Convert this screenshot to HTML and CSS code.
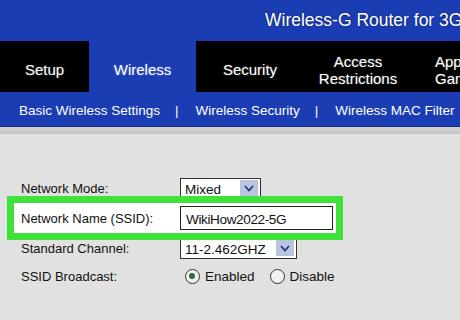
FILE: index.html
```html
<!DOCTYPE html>
<html lang="en">
<head>
    <meta charset="UTF-8">
    <title>Wireless-G Router for 3G/UMTS</title>
    <link rel="stylesheet" href="styles.css">
</head>
<body>

<div class="header">
    <div class="title">Wireless-G Router for 3G/UMTS Broadband</div>
</div>

<div class="tabs">
    <div class="tab tab-setup">Setup</div>
    <div class="tab tab-wireless active">Wireless</div>
    <div class="tab tab-security">Security</div>
    <div class="tab tab-access">Access<br>Restrictions</div>
    <div class="tab tab-apps">Applications &amp;<br>Gaming</div>
</div>

<div class="subnav">
    <span class="sub-link">Basic Wireless Settings</span>
    <span class="sep">|</span>
    <span class="sub-link">Wireless Security</span>
    <span class="sep">|</span>
    <span class="sub-link">Wireless MAC Filter</span>
</div>

<div class="shade"></div>

<div class="content">
    <div class="row">
        <span class="label">Network Mode:</span>
        <div class="select select-mode">
            <span class="select-value">Mixed</span>
            <span class="select-arrow">
                <svg width="10" height="7" viewBox="0 0 10 7"><path d="M1 1 L5 5.5 L9 1" fill="none" stroke="#1d2f7a" stroke-width="1.6"/></svg>
            </span>
        </div>
    </div>

    <!-- highlighted field -->
    <div class="highlight">
        <span class="label">Network Name (SSID):</span>
        <input type="text" class="ssid" value="WikiHow2022-5G">
    </div>

    <div class="row row-channel">
        <span class="label">Standard Channel:</span>
        <div class="select select-channel">
            <span class="select-value">11-2.462GHZ</span>
            <span class="select-arrow">
                <svg width="10" height="7" viewBox="0 0 10 7"><path d="M1 1 L5 5.5 L9 1" fill="none" stroke="#1d2f7a" stroke-width="1.6"/></svg>
            </span>
        </div>
    </div>

    <div class="row row-broadcast">
        <span class="label">SSID Broadcast:</span>
        <span class="radio checked"></span>
        <span class="radio-text">Enabled</span>
        <span class="radio"></span>
        <span class="radio-text">Disable</span>
    </div>
</div>

</body>
</html>
```

FILE: styles.css
```css
* {
    box-sizing: border-box;
}

body {
    margin: 0;
    width: 460px;
    height: 320px;
    overflow: hidden;
    font-family: 'Liberation Sans', Arial, sans-serif;
    background: #e1e1e1;
}

.header {
    height: 41px;
    background: #1b3db4;
    overflow: hidden;
}

.title {
    padding: 10px 0 0 265px;
    white-space: nowrap;
    color: #fff;
    font-size: 17.5px;
    text-shadow: 0 0 2px rgba(0, 0, 0, 0.5);
}

.tabs {
    display: flex;
    height: 51px;
    background: #000;
    overflow: hidden;
}

.tab {
    display: flex;
    align-items: center;
    justify-content: center;
    flex-shrink: 0;
    padding-top: 6px;
    color: #fff;
    font-size: 15px;
    line-height: 17px;
    text-align: center;
    white-space: nowrap;
    text-shadow: 0 0 2px rgba(255, 255, 255, 0.3);
}

.tab-setup {
    width: 89px;
}

.tab-wireless {
    width: 107px;
}

.tab-security {
    width: 108px;
}

.tab-access {
    width: 108px;
    padding-top: 7px;
}

.tab-apps {
    width: 120px;
    justify-content: flex-start;
    padding-left: 23px;
    padding-top: 7px;
    text-align: left;
}

.tab.active {
    background: #1b3db4;
}

.subnav {
    display: flex;
    align-items: center;
    height: 35px;
    padding: 3px 0 0 19px;
    background: #1b3db4;
    border-bottom: 1px solid #152a78;
    color: #fff;
    font-size: 13.5px;
    white-space: nowrap;
}

.sep {
    margin: 0 17px 0 15px;
}

.shade {
    height: 7px;
    background: linear-gradient(#d2d2d2, #c4c4c4);
}

.content {
    padding-top: 44px;
    color: #111;
    font-size: 13px;
}

.row {
    display: flex;
    align-items: center;
    padding-left: 21px;
}

.label {
    width: 159px;
    flex-shrink: 0;
}

.select {
    display: flex;
    align-items: center;
    height: 20px;
    background: #fff;
    border: 1px solid #333;
    font-size: 13.5px;
}

.select-value {
    flex: 1;
    padding: 2px 0 0 4px;
}

.select-arrow {
    display: flex;
    align-items: center;
    justify-content: center;
    width: 18px;
    height: 16px;
    margin-right: 2px;
    background: #b9c5de;
}

.select-mode {
    width: 81px;
}

.highlight {
    position: relative;
    display: flex;
    align-items: center;
    width: 336px;
    height: 44px;
    margin: -2px 0 0 7px;
    padding-left: 7px;
    background: #fff;
    border: 7px solid #3fe23a;
}

.ssid {
    width: 153px;
    height: 24px;
    padding: 2px 0 0 5px;
    border: 1.5px solid #222;
    font-family: 'Liberation Sans', Arial, sans-serif;
    font-size: 13.6px;
    letter-spacing: -0.4px;
    color: #111;
    background: #fff;
}

.row-channel {
    margin-top: -3px;
}

.select-channel {
    width: 117px;
    height: 22px;
}

.row-broadcast {
    margin-top: 10px;
}

.radio {
    width: 15px;
    height: 15px;
    margin: 0 5px 0 5px;
    border: 1.5px solid #333;
    border-radius: 50%;
    background: #f2f2f2;
    position: relative;
}

.radio.checked::after {
    content: "";
    position: absolute;
    left: 3px;
    top: 3px;
    width: 6px;
    height: 6px;
    border-radius: 50%;
    background: #2e6b3c;
}

.radio-text {
    font-size: 13.5px;
    margin-right: 10px;
}
```
